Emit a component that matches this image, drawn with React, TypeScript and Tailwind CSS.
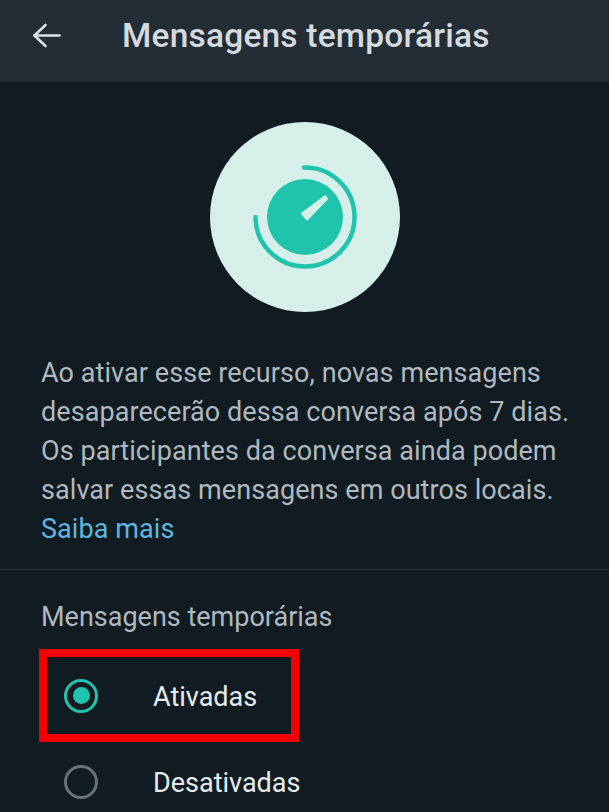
const App = () => {
    return (
        <div className="h-[812px] w-[609px] overflow-hidden bg-[#111b22] font-['Roboto',sans-serif]">
            <div className="flex h-[82px] items-center bg-[#222d36] pb-[10px] pl-[32px]">
                <svg width="29" height="28" viewBox="0 0 29 28" fill="none" stroke="#dfe3e7" strokeWidth="2.6" strokeLinecap="round" strokeLinejoin="round">
                    <path d="M2.5 13.5H27.500" />
                    <path d="M13.500 3L2.5 13.5L13.500 24" />
                </svg>
                <div className="ml-[61px] text-[33.500px] font-medium leading-none tracking-[0.2px] text-[#d5dadf]">Mensagens temporárias</div>
            </div>

            <div className="mt-[40px] flex justify-center">
                <div className="flex h-[190px] w-[190px] items-center justify-center rounded-full bg-[#d6efe9]">
                    <svg width="110" height="110" viewBox="0 0 110 110" fill="none">
                        <circle cx="55" cy="55" r="38" fill="#20c4ad" />
                        <path d="M54 5.500A49.500 49.500 0 1 1 5.500 55" stroke="#20c4ad" strokeWidth="4.5" strokeLinecap="round" />
                        <path d="M57 57.500L77 36.800L75 34.200L52 51.500Z" fill="#d6efe9" stroke="#d6efe9" strokeWidth="2" strokeLinejoin="round" />
                    </svg>
                </div>
            </div>

            <div className="mt-[42px] whitespace-nowrap pl-[41px] text-[27px] leading-[39px] tracking-[0.07px] text-[#b0b9bf]">
                <div>Ao ativar esse recurso, novas mensagens</div>
                <div>desaparecerão dessa conversa após 7 dias.</div>
                <div>Os participantes da conversa ainda podem</div>
                <div>salvar essas mensagens em outros locais.</div>
                <div className="text-[#5fb6e0]">Saiba mais</div>
            </div>

            <div className="mt-[20px] h-px bg-[#2c363d]" />

            <div className="relative px-[41px] pt-[28px]">
                <div className="text-[27px] leading-[39px] text-[#b0b9bf]">Mensagens temporárias</div>

                <div className="mt-[41px] flex h-[39px] items-center pl-[23px]">
                    <div className="mb-[4px] flex h-[34px] w-[34px] items-center justify-center rounded-full border-[3px] border-[#20c4ad]">
                        <div className="h-[17px] w-[17px] rounded-full bg-[#20c4ad]" />
                    </div>
                    <div className="ml-[55px] text-[27px] text-[#e8ecee]">Ativadas</div>
                </div>

                <div className="mt-[47px] flex h-[39px] items-center pl-[23px]">
                    <div className="mb-[4px] h-[34px] w-[34px] rounded-full border-[3px] border-[#6b7277]" />
                    <div className="ml-[55px] text-[27px] text-[#e8ecee]">Desativadas</div>
                </div>

                <div className="absolute left-[39px] top-[79px] h-[93px] w-[260px] border-[8px] border-[#f40000]" />
            </div>
        </div>
    );
};

export default App;
